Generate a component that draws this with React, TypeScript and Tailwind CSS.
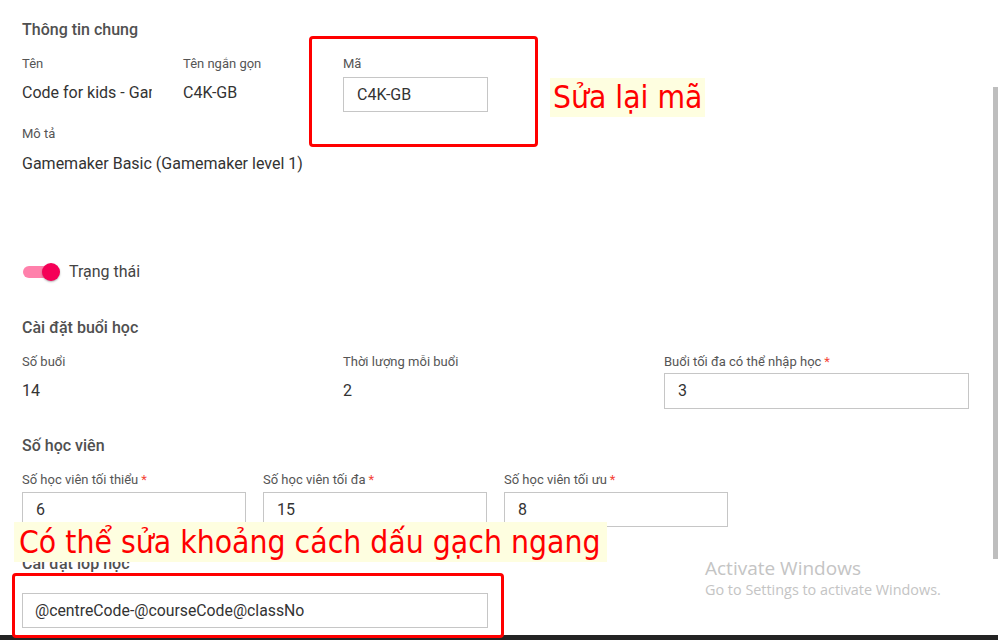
import React from 'react';

const FONT = "font-['Roboto','Liberation_Sans',sans-serif]";
const NOTE = "font-['DejaVu_Sans_Condensed','DejaVu_Sans',sans-serif]";

function Label({ text, required }: { text: string; required?: boolean }) {
  return (
    <div className="text-[13px] leading-[16px] text-[#555] whitespace-nowrap">
      {text}
      {required && <span className="text-[#f44336] ml-[3px]">*</span>}
    </div>
  );
}

function Value({ text }: { text: string }) {
  return <div className="mt-[11px] text-[16px] leading-[20px] text-[#333] whitespace-nowrap overflow-hidden">{text}</div>;
}

function Input({ value, className, small }: { value: string; className?: string; small?: boolean }) {
  return (
    <div
      className={`h-[35px] border border-[#c6c6c6] flex items-center text-[#333] ${
        small ? 'text-[15.8px] pl-[12px]' : 'text-[16px] pl-[13px]'
      } ${className ?? ''}`}
    >
      {value}
    </div>
  );
}

function Heading({ text, className }: { text: string; className?: string }) {
  return <div className={`text-[16px] leading-[20px] font-medium text-[#505050] ${className ?? ''}`}>{text}</div>;
}

export default function App() {
  return (
    <div className={`relative w-[998px] h-[640px] overflow-hidden bg-white flex flex-col ${FONT}`}>
      <div className="flex-1 overflow-hidden pl-[22px] pt-[20px]">
        <Heading text="Thông tin chung" />

        {/* row 1 */}
        <div className="flex mt-[16px]">
          <div className="w-[130px] mr-[31px]">
            <Label text="Tên" />
            <Value text="Code for kids - Gamemaker Basic" />
          </div>
          <div className="w-[160px]">
            <Label text="Tên ngắn gọn" />
            <Value text="C4K-GB" />
          </div>
          <div className="w-[145px]">
            <Label text="Mã" />
            <Input value="C4K-GB" className="mt-[5px]" />
          </div>
        </div>

        <div className="mt-[14px]">
          <Label text="Mô tả" />
          <div className="mt-[12px] text-[16px] leading-[20px] text-[#333]">Gamemaker Basic (Gamemaker level 1)</div>
        </div>

        {/* toggle */}
        <div className="mt-[88px] flex items-center h-[20px]">
          <div className="relative w-[38px] h-[20px] flex items-center">
            <div className="w-[34px] h-[12px] rounded-full bg-[#ff80ab] ml-[1px]" />
            <div className="absolute right-0 top-[1px] w-[18px] h-[18px] rounded-full bg-[#f50057] shadow-[0_1px_2px_rgba(0,0,0,0.3)]" />
          </div>
          <span className="ml-[9px] text-[16px] text-[#444]">Trạng thái</span>
        </div>

        <Heading text="Cài đặt buổi học" className="mt-[36px]" />
        <div className="grid grid-cols-[321px_321px_305px] mt-[16px]">
          <div>
            <Label text="Số buổi" />
            <Value text="14" />
          </div>
          <div>
            <Label text="Thời lượng mỗi buổi" />
            <Value text="2" />
          </div>
          <div>
            <Label text="Buổi tối đa có thể nhập học" required />
            <Input value="3" className="mt-[3px] h-[36px]" />
          </div>
        </div>

        <Heading text="Số học viên" className="mt-[27px]" />
        <div className="flex gap-[17px] mt-[16px]">
          {[
            ['Số học viên tối thiểu', '6'],
            ['Số học viên tối đa', '15'],
            ['Số học viên tối ưu', '8'],
          ].map(([l, v]) => (
            <div key={l} className="w-[224px]">
              <Label text={l} required />
              <Input value={v} className="mt-[4px]" />
            </div>
          ))}
        </div>

        <Heading text="Cài đặt lớp học" className="mt-[27px]" />
        <Input value="@centreCode-@courseCode@classNo" small className="mt-[19px] w-[466px]" />
      </div>
      <div className="h-[5px] bg-[#232323]" />

      {/* annotations */}
      <div className="absolute left-[309px] top-[36px] w-[229px] h-[111px] border-[3px] border-[#ff0000] rounded-[4px]" />
      <div className={`absolute left-[550px] top-[78px] h-[39px] px-[3px] bg-[#fefee0] text-[#ff0000] text-[31.5px] leading-[39px] ${NOTE}`}>
        Sửa lại mã
      </div>
      <div className={`absolute left-[14px] top-[522px] h-[40px] pl-[5px] pr-[6px] bg-[#fefee0] text-[#ff0000] text-[31.6px] leading-[40px] ${NOTE}`}>
        Có thể sửa khoảng cách dấu gạch ngang
      </div>
      <div className="absolute left-[12px] top-[573px] w-[492px] h-[65px] border-[3px] border-[#ff0000] rounded-[4px]" />

      {/* scrollbar thumb */}
      <div className="absolute right-0 top-[87px] w-[5px] h-[472px] bg-[#bebebe]" />

      {/* watermark */}
      <div className="absolute left-[705px] top-[556px] text-[#c4c4c4] font-['Open_Sans',sans-serif] pointer-events-none">
        <div className="text-[19px] leading-[24px]">Activate Windows</div>
        <div className="text-[14.4px] leading-[20px]">Go to Settings to activate Windows.</div>
      </div>
    </div>
  );
}
